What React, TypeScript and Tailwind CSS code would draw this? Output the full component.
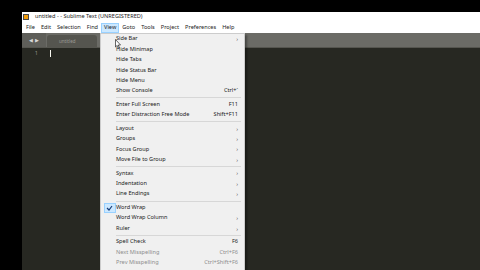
import React from "react";

type Item =
  | { sep: true }
  | {
      sep?: false;
      label: string;
      shortcut?: string;
      sub?: boolean;
      checked?: boolean;
      disabled?: boolean;
    };

const items: Item[] = [
  { label: "Side Bar", sub: true },
  { label: "Hide Minimap" },
  { label: "Hide Tabs" },
  { label: "Hide Status Bar" },
  { label: "Hide Menu" },
  { label: "Show Console", shortcut: "Ctrl+`" },
  { sep: true },
  { label: "Enter Full Screen", shortcut: "F11" },
  { label: "Enter Distraction Free Mode", shortcut: "Shift+F11" },
  { sep: true },
  { label: "Layout", sub: true },
  { label: "Groups", sub: true },
  { label: "Focus Group", sub: true },
  { label: "Move File to Group", sub: true },
  { sep: true },
  { label: "Syntax", sub: true },
  { label: "Indentation", sub: true },
  { label: "Line Endings", sub: true },
  { sep: true },
  { label: "Word Wrap", checked: true },
  { label: "Word Wrap Column", sub: true },
  { label: "Ruler", sub: true },
  { sep: true },
  { label: "Spell Check", shortcut: "F6" },
  { label: "Next Misspelling", shortcut: "Ctrl+F6", disabled: true },
  { label: "Prev Misspelling", shortcut: "Ctrl+Shift+F6", disabled: true },
];

const menus = ["File", "Edit", "Selection", "Find", "View", "Goto", "Tools", "Project", "Preferences", "Help"];

function ViewMenu() {
  return (
    <div className="absolute left-[78px] top-[21px] w-[145px] h-[240px] bg-[#f0f0f0] border border-[#cccccc] shadow-[2px_2px_2px_rgba(0,0,0,0.35)]">
      {items.map((it, i) =>
        it.sep ? (
          <div key={i} className="h-[3.2px] flex items-center pl-[15px] pr-[3px]">
            <div className="h-px w-full bg-[#d7d7d7]" />
          </div>
        ) : (
          <div
            key={i}
            className={`h-[10.4px] flex items-center pr-[6px] ${it.disabled ? "text-[#8d8d8d]" : "text-[#1a1a1a]"}`}
          >
            <div className="w-[15px] h-full flex items-center justify-center">
              {it.checked && (
                <div className="w-[12px] h-[10px] ml-[2px] bg-[#cce8ff] border border-[#99d1ff] flex items-center justify-center">
                  <svg width="7" height="6" viewBox="0 0 7 6">
                    <path d="M1 3 L3 5 L6 1" stroke="#1a3f7a" strokeWidth="1.2" fill="none" />
                  </svg>
                </div>
              )}
            </div>
            <span className="flex-1 whitespace-nowrap">{it.label}</span>
            {it.shortcut && <span className="whitespace-nowrap">{it.shortcut}</span>}
            {it.sub && <span className="text-[#555] text-[6px] leading-none">›</span>}
          </div>
        )
      )}
    </div>
  );
}

export default function App() {
  return (
    <div
      className="w-[480px] h-[270px] bg-black flex flex-col overflow-hidden text-[5.6px] leading-none"
      style={{ fontFamily: '"Noto Sans", "Liberation Sans", sans-serif' }}
    >
      <div className="h-[12px] shrink-0" />
      <div className="flex flex-1 min-h-0">
        <div className="w-[22px] shrink-0" />
        <div className="flex-1 flex flex-col relative bg-[#272822]">
          {/* title bar */}
          <div className="h-[10px] bg-white flex items-center gap-[3px] pl-[1px]">
            <div className="w-[6px] h-[6px] bg-[#4a4a4a] flex items-center justify-center">
              <div className="w-[4px] h-[4px] bg-[#f29d0c]" />
            </div>
            <span className="text-[#222] pl-[3px]">untitled - - Sublime Text (UNREGISTERED)</span>
          </div>
          {/* menu bar */}
          <div className="h-[11px] bg-white flex items-center pl-[1px] text-[#1a1a1a]">
            {menus.map((m) => (
              <div
                key={m}
                className={`h-[10px] flex items-center px-[2px] ${m === "View" ? "bg-[#cce8ff] border border-[#99d1ff]" : "border border-transparent"}`}
              >
                {m}
              </div>
            ))}
          </div>
          {/* tab bar */}
          <div className="h-[15px] bg-[#6b6b66] flex items-end border-b border-[#55554f]">
            <div className="w-[24px] h-full bg-[#5e5e59] flex items-center justify-center gap-[2px] text-[#d8d8d8] text-[5px]">
              <span>◀</span>
              <span>▶</span>
            </div>
            <div className="ml-[1px] w-[50px] h-[12px] bg-[#55554f] rounded-t-[3px] flex items-center pl-[12px] text-[#9a9a94] text-[4.5px]">
              untitled
            </div>
          </div>
          {/* editor */}
          <div className="flex-1 flex">
            <div className="w-[24px] pt-[3px] text-right pr-[8px] text-[#8f908a]">1</div>
            <div className="pt-[2px] pl-[4px]">
              <div className="w-px h-[7px] bg-[#f8f8f0]" />
            </div>
          </div>
          <ViewMenu />
          {/* mouse pointer */}
          <svg className="absolute left-[93px] top-[27px]" width="6" height="10" viewBox="0 0 6 10">
            <path d="M0.5 0.5 L0.5 8 L2.2 6.4 L3.4 9.2 L4.4 8.8 L3.3 6 L5.5 6 Z" fill="#fff" stroke="#000" strokeWidth="0.6" />
          </svg>
        </div>
      </div>
    </div>
  );
}
